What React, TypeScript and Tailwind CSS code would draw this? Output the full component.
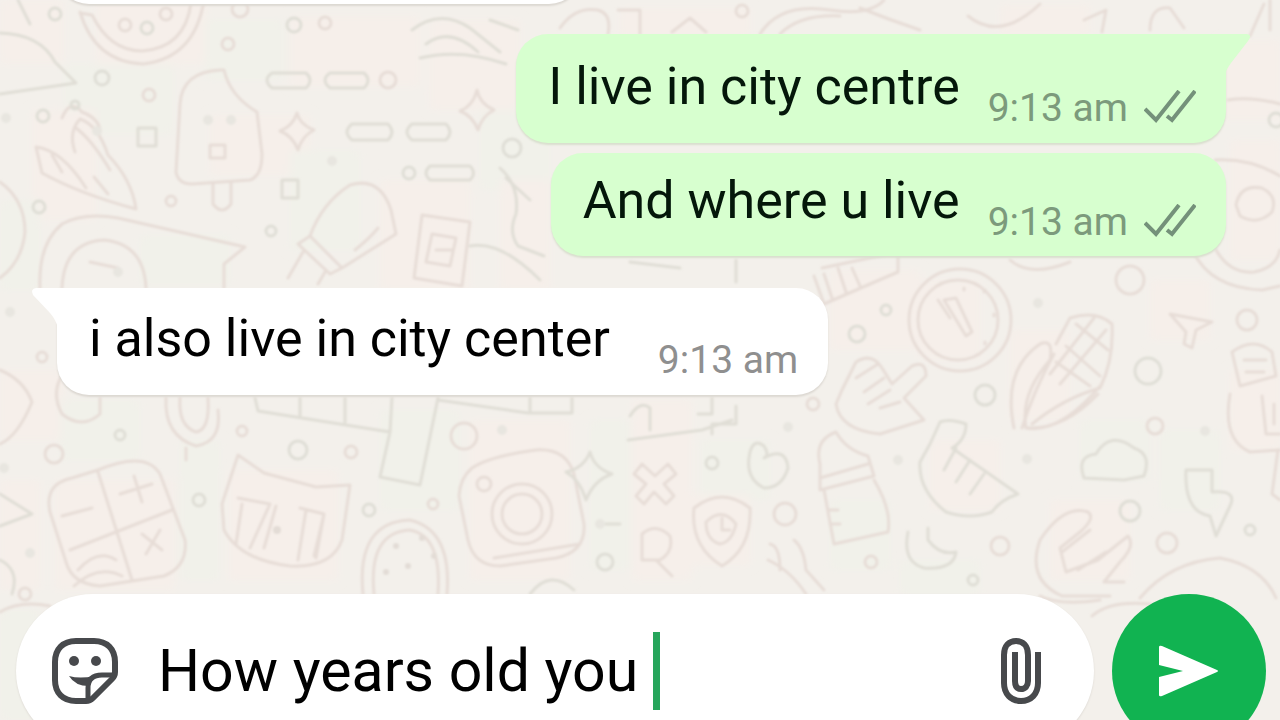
import type { ReactNode } from "react";

const PINK = "#f6efea";
const GREEN = "#f1f1ea";

const washes: [number, number, number, number, string][] = [
  [0, 0, 64, 64, PINK], [64, 64, 110, 70, GREEN], [96, 0, 110, 64, PINK], [32, 110, 64, 110, PINK],
  [0, 200, 40, 90, GREEN], [205, 20, 80, 60, GREEN], [290, 16, 130, 70, PINK], [210, 115, 100, 60, PINK],
  [290, 150, 70, 100, GREEN], [380, 180, 90, 110, PINK], [140, 235, 90, 50, GREEN], [430, 20, 90, 90, PINK],
  [480, 110, 70, 80, GREEN], [500, 180, 50, 110, PINK], [620, 8, 130, 30, PINK], [1000, 5, 90, 30, PINK],
  [1220, 40, 60, 80, PINK], [1230, 140, 50, 120, PINK], [0, 370, 64, 70, PINK], [60, 400, 80, 60, GREEN],
  [0, 480, 40, 110, PINK], [55, 480, 120, 110, PINK], [180, 440, 40, 140, GREEN], [228, 470, 110, 110, PINK],
  [380, 410, 80, 100, GREEN], [470, 420, 100, 160, PINK], [590, 420, 40, 150, GREEN], [632, 400, 60, 180, PINK],
  [700, 440, 70, 60, GREEN], [690, 495, 60, 70, PINK], [830, 270, 90, 80, PINK], [920, 280, 60, 80, PINK],
  [1010, 330, 60, 90, PINK], [1080, 420, 70, 60, GREEN], [830, 500, 60, 70, GREEN], [930, 440, 70, 70, PINK],
  [1050, 500, 80, 80, PINK], [1160, 430, 60, 80, GREEN], [1150, 280, 60, 60, PINK], [1230, 370, 50, 80, PINK],
  [900, 560, 80, 36, GREEN], [0, 610, 40, 110, GREEN],
];

const dots: [number, number, number][] = [
  [55, 14, 6], [228, 44, 6], [102, 78, 7], [149, 95, 6], [43, 116, 6], [240, 9, 8], [294, 25, 7], [325, 23, 6],
  [39, 207, 6], [171, 201, 5], [271, 231, 5], [388, 80, 8], [409, 173, 6], [742, 11, 6], [512, 148, 9],
  [42, 357, 5], [120, 435, 5], [54, 454, 9], [199, 500, 6], [242, 431, 5], [298, 450, 9], [351, 452, 6],
  [369, 510, 6], [464, 436, 13], [605, 562, 8], [785, 514, 11], [712, 463, 6], [813, 404, 6], [886, 310, 5],
  [1130, 280, 14], [1148, 371, 13], [1155, 426, 8], [985, 395, 10], [1000, 546, 9], [1130, 511, 10],
  [1167, 543, 10], [1250, 530, 5], [871, 562, 6], [973, 580, 5], [1247, 320, 10], [857, 334, 8], [25, 594, 6],
  [1276, 120, 7], [433, 504, 5], [75, 105, 4], [125, 25, 6], [147, 28, 6], [166, 14, 6],
];

const grains: [number, number][] = [
  [6, 118], [332, 161], [97, 131], [30, 553], [502, 430], [788, 427], [898, 460], [1038, 303], [1027, 459],
  [208, 120], [231, 120], [118, 272], [4, 468], [10, 312], [600, 524], [1205, 431],
];

const doodles = [
  "M80 12Q95 62 143 64Q195 58 204 0M92 15Q110 51 142 51Q185 48 191 3M80 13L92 15",
  "M0 33Q40 34 55 62L76 83L0 94M18 0L30 24",
  "M36 147L42 173Q80 194 136 209Q132 180 108 155Q98 125 80 119Q68 132 75 152M36 147Q62 150 86 188M76 128Q92 140 110 170M52 155L62 172M94 177L108 194M62 118Q70 98 82 112Q98 118 100 130",
  "M220 70Q182 72 180 104L176 172Q178 184 192 184L250 180Q262 176 262 154L257 112Q230 96 224 70ZM213 184V204Q222 216 231 204V183M210 145H225V158H210Z",
  "M272 73H306Q314 80 306 88H272Q262 80 272 73ZM330 73H364Q372 80 364 88H330Q320 80 330 73ZM352 124H388Q396 132 388 140H352Q342 132 352 124ZM412 124H446Q454 132 446 140H412Q402 132 412 124ZM430 166H470Q477 173 470 180H430Q422 173 430 166Z",
  "M297 113Q300 125 314 130Q302 136 298 150Q293 136 280 131Q293 126 297 113ZM477 90Q480 104 494 110Q482 116 478 130Q473 116 460 111Q473 106 477 90Z",
  "M310 236Q322 203 350 185Q380 176 391 210L396 234L342 268ZM310 236L298 244L330 274L342 268M303 252L288 278M325 272L318 284M355 250Q370 238 378 228",
  "M282 180H298V198H282ZM138 128H156V146H138Z",
  "M0 182Q25 200 25 232Q22 262 0 278M40 288Q38 244 62 224Q84 212 118 218L245 247L224 264V288M62 288Q64 242 104 240Q144 244 146 288M90 262L118 268",
  "M422 215L470 222L462 286L414 278ZM432 234L456 238L450 266L426 262ZM436 250H452",
  "M412 30Q440 8 470 28L500 52M426 44Q450 26 478 52M420 58Q460 48 506 64M490 20L518 30",
  "M560 28Q575 6 598 10Q612 14 608 34M618 10H640V34M672 32L690 18L706 32M760 34Q780 2 830 10Q870 16 884 0M780 34Q800 14 840 16M860 8Q890 20 920 30M968 16Q1000 42 1040 4M1084 20L1106 10L1102 32M1150 30Q1150 6 1170 8L1184 28M1250 36L1264 4M1270 0V30",
  "M1228 100Q1250 96 1280 104M1215 160Q1250 158 1280 176M1236 205Q1240 184 1262 188Q1278 196 1272 212Q1258 226 1240 216ZM1190 244Q1206 288 1262 290L1280 286M1216 250Q1230 274 1254 272Q1276 268 1280 250M1010 260Q1030 278 1070 262",
  "M500 168Q520 186 516 214Q508 232 518 246L544 256M506 178L530 200M470 246Q500 240 540 280M630 262L680 268M736 260V282",
  "M822 268L898 252V272L870 284L824 304L814 276M824 274L832 298M838 268L846 292M852 268L860 286",
  "M0 370Q24 380 32 402Q18 436 0 444M64 372Q50 392 62 414Q82 430 100 414V398M166 398Q164 436 196 446Q222 442 218 410M180 398Q178 426 196 432Q210 430 208 398M186 448V460",
  "M255 398L258 411L390 432L380 477L420 485L438 398M300 398V416M345 398V422M390 432L392 398M438 400L528 413H572V398M530 398V412",
  "M50 512Q44 484 72 478L98 470Q146 450 160 474L185 540Q188 566 164 576L100 586Q72 584 66 562ZM98 472L132 580M70 550L172 510M62 516L92 508M120 494L152 484M134 476L142 502M142 534L162 550M160 530L146 554M78 570Q98 548 116 560M74 586Q98 564 122 576",
  "M222 504L238 455L264 473L316 487L350 485L342 540Q332 568 290 566Q240 560 224 530ZM238 498L270 504L250 548M242 504L236 544M276 506L264 548M300 508L324 514L314 556M306 510L298 560M324 514L316 558",
  "M0 494L32 514L0 526M0 560Q20 570 12 594",
  "M363 594Q356 522 410 520Q452 530 447 594M374 594Q368 532 410 530Q442 536 438 594",
  "M472 468Q490 456 536 450Q566 448 574 474L584 524Q586 552 556 558L500 566Q474 566 468 540L459 496Q460 478 472 468ZM494 558L580 544",
  "M590 452Q594 468 612 474Q594 480 586 500Q580 480 566 472Q584 468 590 452M606 524H620M530 594Q550 568 574 590",
  "M634 474L642 464L655 476L668 464L676 474L664 484L674 496L666 504L654 492L644 504L636 496L646 484ZM642 534Q656 522 670 536Q674 552 660 560H642ZM656 560L672 576",
  "M694 508Q722 486 750 508Q752 548 722 566Q690 546 694 508ZM706 522Q722 506 736 524Q732 542 720 544Q706 540 706 522M722 518V530H730",
  "M750 452Q754 438 764 446Q770 456 764 458Q786 446 788 468Q782 488 764 488Q744 478 750 452M628 440L702 430L732 420M630 416Q640 400 650 408V430M698 414H712V398M712 434V424H736V406",
  "M820 464Q814 440 836 432Q846 450 868 456L874 476L820 490ZM820 478L868 464M824 490L834 544L888 532Q892 510 874 480M828 510H838M830 524H840M806 594Q790 570 768 560M770 544Q780 546 780 570M794 540Q804 548 806 570L824 590",
  "M842 390L856 362Q872 352 882 368L892 384L912 366Q926 360 926 376L904 398L924 420L880 434Q840 430 836 404ZM856 378L878 364M864 392L884 378M868 404L890 390M880 408L900 402",
  "M930 444L940 422Q950 418 966 424Q966 440 952 448L1018 494Q1000 500 992 512Q970 520 946 512Q918 490 920 462ZM944 470L956 448M956 482L970 460M970 494L984 474",
  "M1014 428Q1002 370 1040 344Q1054 338 1050 360Q1020 394 1026 428Q1064 430 1098 394M1026 428Q1060 434 1102 384M1056 344L1070 318Q1096 310 1112 324Q1114 360 1100 388Q1064 398 1032 424M1066 346L1100 376M1056 362L1090 386M1076 324L1108 350M1060 384L1106 330M1050 374L1094 318M1022 428Q1034 390 1054 354",
  "M1170 314L1212 322L1196 330L1192 348L1184 344L1186 332ZM1232 352Q1254 336 1272 352L1276 376L1240 386ZM1244 360H1266M1246 372H1264M1230 394Q1222 440 1250 452L1280 450M1262 396L1266 434H1280M1274 404V424",
  "M1084 478Q1076 456 1096 454Q1110 430 1134 448Q1152 454 1144 476L1124 480ZM1186 470H1212V492Q1238 490 1230 506L1216 536L1210 516Q1184 512 1186 470M908 532Q902 562 924 568Q954 570 956 552Q940 556 928 540V528",
  "M1040 540Q1064 504 1088 512Q1096 518 1080 532L1060 548L1066 572L1098 560L1128 536Q1136 546 1120 562L1104 582H1124M1040 540Q1026 580 1062 596H1110M1062 552L1090 530M1078 570L1106 552",
  "M1140 598Q1170 562 1220 558Q1262 566 1276 598M1092 616Q1110 600 1150 604M1040 596Q1060 606 1100 600M1278 450L1272 494L1280 500M0 612Q20 600 50 606",
];

function Wallpaper() {
  return (
    <svg
      className="pointer-events-none absolute inset-0 h-full w-full"
      viewBox="0 0 1280 720"
      preserveAspectRatio="xMidYMid slice"
      aria-hidden="true"
    >
      <defs>
        <filter id="wash" x="-20%" y="-20%" width="140%" height="140%">
          <feGaussianBlur stdDeviation="5" />
        </filter>
        <filter id="soft">
          <feGaussianBlur stdDeviation="1" />
        </filter>
      </defs>
      <g filter="url(#wash)">
        {washes.map(([x, y, w, h, fill], i) => (
          <rect key={i} x={x} y={y} width={w} height={h} fill={fill} />
        ))}
      </g>
      <g filter="url(#soft)" fill="none" strokeLinejoin="round" strokeLinecap="round" strokeWidth="3">
        {doodles.map((d, i) => (
          <path key={i} d={d} stroke={i % 3 === 1 ? "#e0ded6" : "#e7ddd7"} />
        ))}
        {dots.map(([cx, cy, r], i) => (
          <circle key={i} cx={cx} cy={cy} r={r} stroke={i % 2 ? "#e7ddd7" : "#dfded6"} />
        ))}
        {grains.map(([cx, cy], i) => (
          <circle key={i} cx={cx} cy={cy} r="5" fill="#e8e6e0" />
        ))}
        <g stroke="#e7ddd7">
          <circle cx="960" cy="320" r="51" />
          <circle cx="958" cy="320" r="40" />
          <path d="M944 300L956 298L972 332L966 336ZM950 318L938 300M964 288V290M985 290L984 292M994 314V316M985 342V344" />
          <circle cx="522" cy="514" r="30" />
          <circle cx="522" cy="514" r="20" />
          <circle cx="484" cy="484" r="7" />
        </g>
        <g fill="#e3dcd6">
          <circle cx="396" cy="546" r="3" />
          <circle cx="422" cy="538" r="3" />
          <circle cx="434" cy="556" r="3" />
          <circle cx="408" cy="566" r="3" />
          <circle cx="386" cy="572" r="3" />
          <circle cx="277" cy="530" r="4" />
        </g>
      </g>
    </svg>
  );
}

function Ticks() {
  return (
    <svg className="h-9 w-[52px] shrink-0" viewBox="0 0 52 36" fill="none" stroke="#74917a" strokeWidth="4" role="img" aria-label="Delivered">
      <path d="M1 19L12 30L35 1M23 26L28 30L51 1" />
    </svg>
  );
}

function Message({ time, sent, tail, children }: { time: string; sent?: boolean; tail?: boolean; children: ReactNode }) {
  return (
    <li
      className={
        sent
          ? "relative flex w-fit items-start self-end rounded-[32px] bg-[#d7ffcf] pl-8 pr-[30px] shadow-[0_2px_2px_#d9dfce] " +
            (tail ? "h-[109px] rounded-tr-none" : "h-[103px]")
          : "relative flex h-[107px] w-fit items-start rounded-[32px] rounded-tl-none bg-white pl-8 pr-[30px] shadow-[0_2px_2px_#dcd8d2]"
      }
    >
      {tail && sent && (
        <svg className="absolute left-full top-0 -ml-px h-10 w-8" viewBox="0 0 32 40" aria-hidden="true">
          <path d="M0 0H22Q28 1 23 7L6 29Q1 36 0 40Z" fill="#d7ffcf" />
        </svg>
      )}
      {tail && !sent && (
        <svg className="absolute right-full top-0 -mr-px h-10 w-7" viewBox="0 0 28 40" aria-hidden="true">
          <path d="M28 0H6Q0 1 3 7L20 25Q26 32 28 40Z" fill="#ffffff" />
        </svg>
      )}
      <p
        className={
          "text-[52px] leading-[60px] " +
          (sent ? "text-[#04170a] " : "text-black ") +
          (!sent ? "pt-[21px]" : tail ? "pt-[23px]" : "pt-[18px]")
        }
      >
        {children}
      </p>
      <div
        className={
          "flex items-center gap-4 " +
          (sent ? "ml-7 " : "ml-12 ") +
          (!sent ? "pt-12" : tail ? "pt-[50px]" : "pt-[45px]")
        }
      >
        <time className={"text-[39px] leading-[48px] " + (sent ? "text-[#7c9a7c]" : "text-[#8f8f8f]")}>{time}</time>
        {sent && <Ticks />}
      </div>
    </li>
  );
}

function StickerIcon() {
  return (
    <svg className="h-[66px] w-[66px]" viewBox="0 0 66 66" fill="none" stroke="#47494c" strokeWidth="6" aria-hidden="true">
      <path d="M24 3H42C55 3 63 11 63 24V34C63 37 62 39 60 41L41 60C39 62 37 63 34 63H24C11 63 3 55 3 42V24C3 11 11 3 24 3Z" />
      <path d="M36 61V50C36 41 41 37 50 37H62" strokeWidth="5" />
      <path d="M17 38Q28 41 42 38L37 48Q23 48 17 38Z" fill="#47494c" stroke="none" />
      <circle cx="22" cy="23" r="5" fill="#47494c" stroke="none" />
      <circle cx="44" cy="23" r="5" fill="#47494c" stroke="none" />
    </svg>
  );
}

function ClipIcon() {
  return (
    <svg className="h-[66px] w-[42px]" viewBox="0 0 42 66" fill="none" stroke="#47494c" strokeWidth="6" aria-hidden="true">
      <path d="M38 14V45C38 56 31 63 21 63C11 63 4 56 4 45V17C4 8 9 3 16 3C23 3 28 8 28 17V43C28 48 25 51 21 51C17 51 15 48 15 43V14" />
    </svg>
  );
}

export default function App() {
  return (
    <main className="relative flex h-screen flex-col overflow-hidden bg-[#f3f0eb] font-[Roboto,'Liberation_Sans',sans-serif]">
      <Wallpaper />
      <ul className="relative flex flex-1 flex-col pl-[57px] pr-[54px]">
        <li className="-mt-24 mb-[30px] h-[100px] w-[524px] shrink-0 rounded-[32px] bg-white shadow-[0_2px_2px_#dcd8d2]" aria-hidden="true" />
        <Message time="9:13 am" sent tail>I live in city centre</Message>
        <li className="h-[10px] shrink-0" aria-hidden="true" />
        <Message time="9:13 am" sent>And where u live</Message>
        <li className="h-8 shrink-0" aria-hidden="true" />
        <Message time="9:13 am" tail>i also live in city center</Message>
      </ul>
      <form className="relative flex h-[126px] shrink-0 items-start gap-[18px] pl-4 pr-[14px]" onSubmit={(e) => e.preventDefault()}>
        <div className="flex h-[154px] min-w-0 flex-1 items-center rounded-full bg-white pl-9 pr-[52px] shadow-[0_1px_2px_#dcd8d2]">
          <button type="button" aria-label="Stickers" className="shrink-0">
            <StickerIcon />
          </button>
          <input
            aria-label="Message"
            defaultValue="How years old you "
            className="ml-10 min-w-0 bg-transparent text-[59px] leading-[76px] text-black caret-transparent outline-none [field-sizing:content]"
          />
          <span className="h-[78px] w-[7px] shrink-0 bg-[#27a65c]" aria-hidden="true" />
          <button type="button" aria-label="Attach" className="ml-auto shrink-0">
            <ClipIcon />
          </button>
        </div>
        <button type="submit" aria-label="Send" className="flex size-[154px] shrink-0 items-center justify-center rounded-full bg-[#11b351]">
          <svg className="h-[52px] w-[60px]" viewBox="0 0 60 52" fill="#ffffff" aria-hidden="true">
            <path d="M0 2Q0 0 3 1L58 25Q60 26 58 27L3 51Q0 52 0 50V32L24 26L0 20Z" />
          </svg>
        </button>
      </form>
    </main>
  );
}
